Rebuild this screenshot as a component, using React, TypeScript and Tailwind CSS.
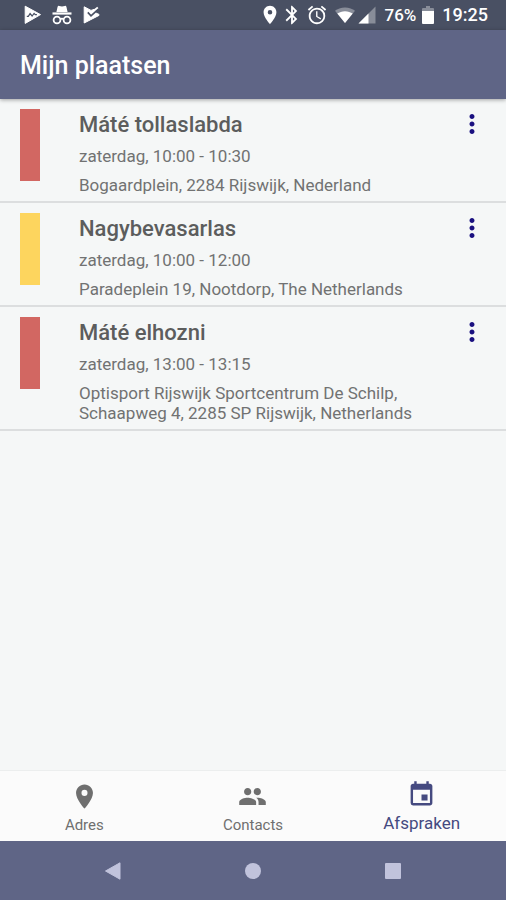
import { FC, useState } from "react";
import clsx from "clsx";
import { IconType } from "react-icons";
import {
  MdAlarm,
  MdBluetooth,
  MdEvent,
  MdMoreVert,
  MdPeople,
  MdPlace,
} from "react-icons/md";

interface Appointment {
  id: string;
  title: string;
  time: string;
  address: string;
  color: string;
}

interface Tab {
  id: string;
  label: string;
  Icon: IconType;
}

const appointments: Appointment[] = [
  {
    id: "1",
    title: "Máté tollaslabda",
    time: "zaterdag, 10:00 - 10:30",
    address: "Bogaardplein, 2284 Rijswijk, Nederland",
    color: "bg-[#d26762]",
  },
  {
    id: "2",
    title: "Nagybevasarlas",
    time: "zaterdag, 10:00 - 12:00",
    address: "Paradeplein 19, Nootdorp, The Netherlands",
    color: "bg-[#fdd55e]",
  },
  {
    id: "3",
    title: "Máté elhozni",
    time: "zaterdag, 13:00 - 13:15",
    address:
      "Optisport Rijswijk Sportcentrum De Schilp, Schaapweg 4, 2285 SP Rijswijk, Netherlands",
    color: "bg-[#d26762]",
  },
];

const tabs: Tab[] = [
  { id: "adres", label: "Adres", Icon: MdPlace },
  { id: "contacts", label: "Contacts", Icon: MdPeople },
  { id: "afspraken", label: "Afspraken", Icon: MdEvent },
];

const StatusBar: FC = () => (
  <div className="flex h-[30px] items-center justify-between bg-[#495063] pr-[18px] pl-6 text-white">
    <div className="flex items-center gap-2.5">
      {/* Play Protect */}
      <svg viewBox="0 0 18 20" className="h-5 w-[18px]" fill="none">
        <path
          d="M1.2 1.2 16.5 9.6 1.2 18.4Z"
          fill="currentColor"
          stroke="currentColor"
          strokeLinejoin="round"
        />
        <path
          d="M2.8 11.4h1.5l1.8-2.8 2 2.4 2-2.6 1.2 1.2h1.6"
          stroke="#495063"
          strokeWidth="1.2"
        />
      </svg>
      {/* Incognito */}
      <svg viewBox="0 0 20 20" className="h-5 w-5" fill="none">
        <path
          d="M5.6 1.8c.3-.9.9-1.1 1.6-.9l2.8.6 2.8-.6c.7-.2 1.3 0 1.6.9L15.6 7H4.4Z"
          fill="currentColor"
        />
        <path d="M.5 7.4h19v2.2H.5Z" fill="currentColor" />
        <circle cx="5" cy="15" r="3.4" stroke="currentColor" strokeWidth="1.8" />
        <circle cx="15" cy="15" r="3.4" stroke="currentColor" strokeWidth="1.8" />
        <path d="M8.2 14.4c1-.9 2.6-.9 3.6 0" stroke="currentColor" strokeWidth="1.8" />
      </svg>
      {/* Play check */}
      <svg viewBox="0 0 18 20" className="h-5 w-[18px]" fill="none">
        <path
          d="M2.2 1.8 9 5.4l3-1L13.8 8l3.2 1.4v1L2.2 18Z"
          fill="currentColor"
          stroke="currentColor"
          strokeLinejoin="round"
        />
        <path d="m9.6 7.6 6.4-5" stroke="currentColor" strokeWidth="2.4" />
        <path d="m5.8 7.4 3.2 3.4 8-7.2" stroke="#495063" strokeWidth="1.7" />
      </svg>
    </div>

    <div className="flex items-center">
      <MdPlace className="size-[22px]" />
      <MdBluetooth className="size-[22px]" />
      <MdAlarm className="ml-[3px] size-[22px]" />
      {/* Wifi */}
      <svg viewBox="0 0 22 18" className="ml-1.5 h-[18px] w-[22px]" fill="currentColor">
        <path d="M11 1.5C7 1.5 3.5 2.8 1 4.8L11 17 21 4.8C18.5 2.8 15 1.5 11 1.5Z" opacity="0.35" />
        <path d="M11 5.2C8 5.2 5.4 6.1 3.3 7.6L11 17l7.7-9.4C16.6 6.1 14 5.2 11 5.2Z" />
      </svg>
      {/* Mobile signal */}
      <svg viewBox="0 0 18 18" className="ml-0.5 size-[18px]" fill="currentColor">
        <path d="M17.5.5v17H.5Z" opacity="0.35" />
        <path d="M10.5 7.5v10H.5Z" />
      </svg>
      <span className="ml-2 text-[17px] leading-5 font-medium">76%</span>
      {/* Battery */}
      <svg viewBox="0 0 12 20" className="ml-1.5 h-5 w-3" fill="currentColor">
        <path d="M4 1h4v2h3q1 0 1 1v3H0V4q0-1 1-1h3Z" opacity="0.35" />
        <path d="M0 6h12v12q0 1-1 1H1q-1 0-1-1Z" />
      </svg>
      <span className="ml-2 text-lg leading-5 font-medium">19:25</span>
    </div>
  </div>
);

const AppointmentItem: FC<{ appointment: Appointment }> = ({
  appointment,
}) => (
  <li className="flex items-start border-b-2 border-[#dcdedf] pt-2.5 pr-[19px] pb-[6px] pl-5">
    <div className={clsx("h-[72px] w-5 shrink-0", appointment.color)} />
    <div className="ml-[39px] min-w-0 flex-1 text-[#717272]">
      <h2 className="truncate text-[22px] leading-8 font-medium text-[#5c5d5d]">
        {appointment.title}
      </h2>
      <p className="text-[17px] leading-[30px]">{appointment.time}</p>
      <p className="mt-1 text-[17px] leading-5">{appointment.address}</p>
    </div>
    <button
      type="button"
      aria-label={`Opties voor ${appointment.title}`}
      className="text-[#1a1080]"
    >
      <MdMoreVert className="size-[30px]" />
    </button>
  </li>
);

const NavigationBar: FC = () => (
  <div className="flex h-[59px] items-center justify-center gap-[104px] bg-[#5f6586] text-[#c1c3dc]">
    <button type="button" aria-label="Terug" className="p-2.5">
      <svg viewBox="0 0 16 18" className="h-[18px] w-4" fill="currentColor">
        <path d="M15 .8v16.4L.5 9Z" stroke="currentColor" strokeLinejoin="round" />
      </svg>
    </button>
    <button type="button" aria-label="Start" className="p-2.5">
      <div className="size-4 rounded-full bg-current" />
    </button>
    <button type="button" aria-label="Overzicht" className="p-2.5">
      <div className="size-4 rounded-[1px] bg-current" />
    </button>
  </div>
);

const App: FC = () => {
  const [activeTab, setActiveTab] = useState("afspraken");

  return (
    <div className="flex min-h-screen flex-col bg-[#f5f7f7] font-[Roboto,sans-serif]">
      <StatusBar />

      <header className="flex h-[69px] items-center bg-[#5f6586] px-5 pt-[2px] shadow-[0_1px_4px_rgba(0,0,0,0.35)]">
        <h1 className="text-[25px] leading-8 font-medium text-white">
          Mijn plaatsen
        </h1>
      </header>

      <main className="flex-1">
        <ul>
          {appointments.map((appointment) => (
            <AppointmentItem key={appointment.id} appointment={appointment} />
          ))}
        </ul>
      </main>

      {/* Tabs */}
      <nav className="grid h-[71px] grid-cols-3 border-t border-[#eceeee] bg-[#fbfbfb]">
        {tabs.map(({ id, label, Icon }) => {
          const isActive = id === activeTab;

          return (
            <button
              key={id}
              type="button"
              onClick={() => setActiveTab(id)}
              className={clsx(
                "flex flex-col items-center leading-7",
                isActive
                  ? "pt-[9px] text-[17px] text-[#454a80]"
                  : "pt-[11px] text-[15px] text-[#6f6f6f]",
              )}
            >
              <Icon className="size-[29px] shrink-0" />
              {label}
            </button>
          );
        })}
      </nav>

      <NavigationBar />
    </div>
  );
};

export default App;
